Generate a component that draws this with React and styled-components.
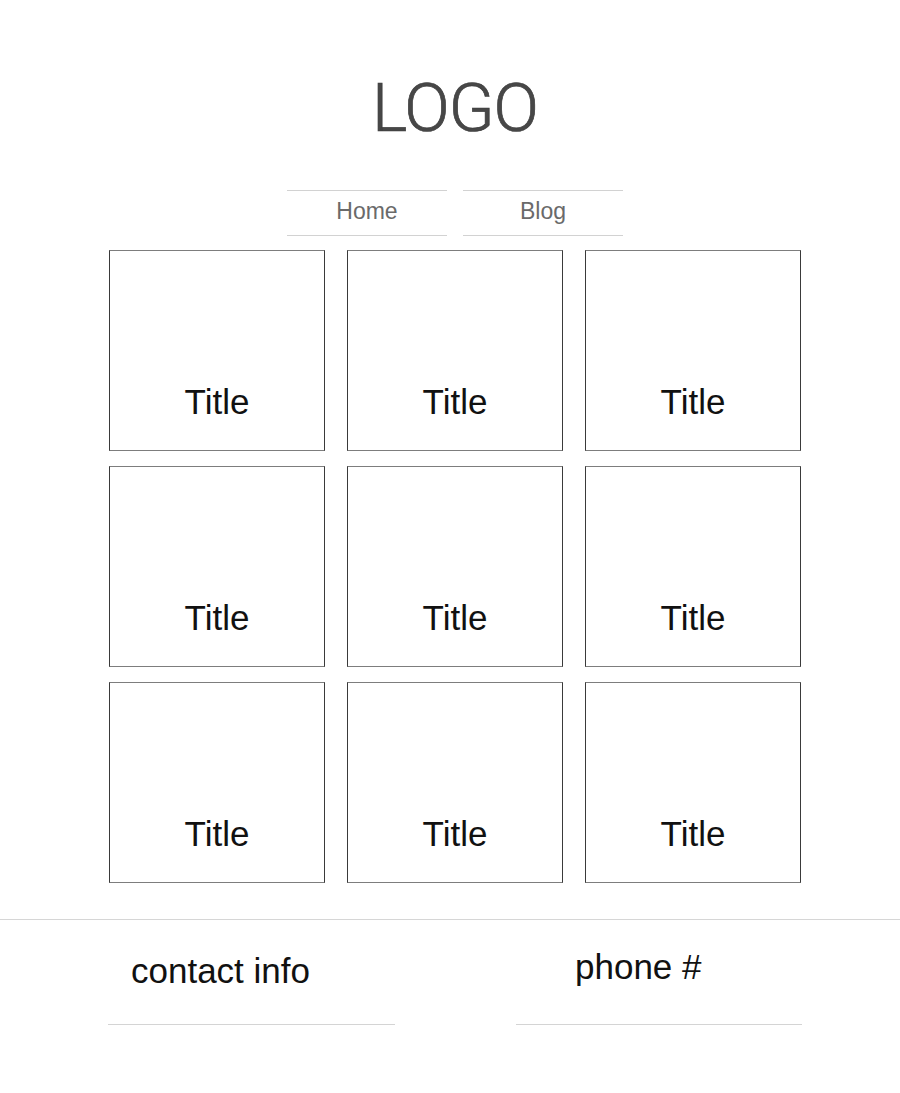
import React from "react";
import styled, { createGlobalStyle } from "styled-components";

const GlobalStyle = createGlobalStyle`
  html, body {
    margin: 0;
    padding: 0;
    background: #ffffff;
  }
  body {
    font-family: "Liberation Sans", Arial, sans-serif;
    color: #111;
  }
`;

const Page = styled.div`
  width: 900px;
  min-height: 1093px;
  display: flex;
  flex-direction: column;
`;

const Main = styled.main`
  display: flex;
  flex-direction: column;
  align-items: center;
  padding-left: 10px;
`;

const Logo = styled.h1`
  margin: 75px 0 0;
  font-family: Roboto, "Liberation Sans", sans-serif;
  font-weight: 300;
  font-size: 67px;
  line-height: 1;
  color: #474747;
  letter-spacing: -1px;
  -webkit-text-stroke: 0.7px #3c3c3c;
`;

const Nav = styled.nav`
  display: flex;
  gap: 16px;
  margin-top: 48px;
`;

const NavItem = styled.a`
  width: 160px;
  line-height: 40px;
  padding-bottom: 4px;
  border-top: 1px solid #d2d2d2;
  border-bottom: 1px solid #d2d2d2;
  text-align: center;
  font-size: 23px;
  color: #6a6a6a;
  text-decoration: none;
`;

const Grid = styled.section`
  display: grid;
  grid-template-columns: repeat(3, 216px);
  grid-auto-rows: 201px;
  column-gap: 22px;
  row-gap: 15px;
  margin-top: 14px;
`;

const Card = styled.div`
  box-sizing: border-box;
  border: 1px solid #3a3a3a;
  border-top-color: #7d7d7d;
  border-bottom-color: #7d7d7d;
  display: flex;
  flex-direction: column;
  justify-content: flex-end;
  align-items: center;
  padding-bottom: 31px;
`;

const CardTitle = styled.span`
  font-size: 35px;
  line-height: 1;
  color: #111;
`;

const Footer = styled.footer`
  margin-top: 36px;
  border-top: 1px solid #d6d6d6;
  display: flex;
  gap: 121px;
  padding: 33px 0 0 108px;
`;

const FooterCol = styled.div`
  width: ${(p) => p.$width}px;
  padding-bottom: 36px;
  border-bottom: 1px solid #d4d4d4;
`;

const FooterText = styled.p`
  margin: ${(p) => (p.$lift ? "-4px" : "0")} 0 0 ${(p) => p.$indent}px;
  font-size: 35px;
  line-height: 1;
  color: #111;
`;

const titles = Array.from({ length: 9 }, () => "Title");

export default function App() {
  return (
    <Page>
      <GlobalStyle />
      <Main>
        <Logo>LOGO</Logo>
        <Nav>
          <NavItem href="#">Home</NavItem>
          <NavItem href="#">Blog</NavItem>
        </Nav>
        <Grid>
          {titles.map((t, i) => (
            <Card key={i}>
              <CardTitle>{t}</CardTitle>
            </Card>
          ))}
        </Grid>
      </Main>
      <Footer>
        <FooterCol $width={287}>
          <FooterText $indent={23}>contact info</FooterText>
        </FooterCol>
        <FooterCol $width={286}>
          <FooterText $indent={59} $lift>
            phone #
          </FooterText>
        </FooterCol>
      </Footer>
    </Page>
  );
}
